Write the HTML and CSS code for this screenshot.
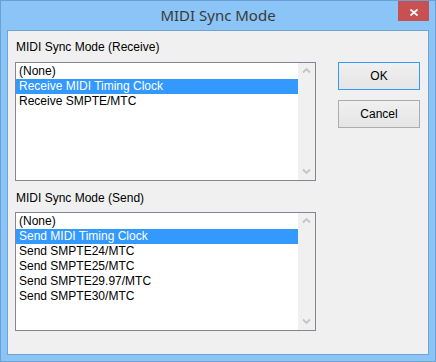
FILE: index.html
```html
<!DOCTYPE html>
<html>
<head>
    <title>MIDI Sync Mode</title>
    <link rel="stylesheet" href="styles.css">
</head>
<body>
    <div class="window">
        <div class="titlebar">
            <span></span>
            <div class="title">MIDI Sync Mode</div>
            <div class="close-btn">
                <svg width="8" height="7" viewBox="0 0 8 7"><path d="M0.5 0.5 L7.5 6.5 M7.5 0.5 L0.5 6.5" stroke="#fff" stroke-width="1.8" fill="none"/></svg>
            </div>
        </div>
        <div class="client">
            <div class="lists">
                <div class="group-label">MIDI Sync Mode (Receive)</div>
                <div class="listbox">
                    <ul class="items">
                        <li>(None)</li>
                        <li class="selected">Receive MIDI Timing Clock</li>
                        <li>Receive SMPTE/MTC</li>
                    </ul>
                    <div class="scrollbar">
                        <svg class="arrow" width="17" height="17" viewBox="0 0 17 17"><path d="M5 9.5 L8.5 6 L12 9.5" stroke="#c4c4c4" stroke-width="1.8" fill="none"/></svg>
                        <svg class="arrow" width="17" height="17" viewBox="0 0 17 17"><path d="M5 6.5 L8.5 10 L12 6.5" stroke="#c4c4c4" stroke-width="1.8" fill="none"/></svg>
                    </div>
                </div>
                <div class="group-label group-send">MIDI Sync Mode (Send)</div>
                <div class="listbox">
                    <ul class="items">
                        <li>(None)</li>
                        <li class="selected">Send MIDI Timing Clock</li>
                        <li>Send SMPTE24/MTC</li>
                        <li>Send SMPTE25/MTC</li>
                        <li>Send SMPTE29.97/MTC</li>
                        <li>Send SMPTE30/MTC</li>
                    </ul>
                    <div class="scrollbar">
                        <svg class="arrow" width="17" height="17" viewBox="0 0 17 17"><path d="M5 9.5 L8.5 6 L12 9.5" stroke="#c4c4c4" stroke-width="1.8" fill="none"/></svg>
                        <svg class="arrow" width="17" height="17" viewBox="0 0 17 17"><path d="M5 6.5 L8.5 10 L12 6.5" stroke="#c4c4c4" stroke-width="1.8" fill="none"/></svg>
                    </div>
                </div>
            </div>
            <div class="buttons">
                <button class="btn btn-default">OK</button>
                <button class="btn">Cancel</button>
            </div>
        </div>
    </div>
</body>
</html>
```

FILE: styles.css
```css
* {
    box-sizing: border-box;
}

body {
    margin: 0;
    font-family: 'Liberation Sans', Arial, sans-serif;
    font-size: 12px;
    color: #000;
}

.window {
    width: 436px;
    height: 362px;
    background-color: #8bc4f6;
    border: 1px solid #6c9fd2;
    display: flex;
    flex-direction: column;
}

.titlebar {
    height: 29px;
    display: grid;
    grid-template-columns: 1fr auto 1fr;
}

.title {
    font-family: 'Noto Sans', sans-serif;
    font-size: 15px;
    line-height: 29px;
    color: #3a3a3a;
}

.close-btn {
    justify-self: end;
    width: 31px;
    height: 20px;
    margin-right: 6px;
    background-color: #c75050;
    display: flex;
    align-items: center;
    justify-content: center;
    padding-top: 2px;
}

.close-btn svg {
    display: block;
}

.client {
    margin: 0 6px 0 6px;
    height: 325px;
    background-color: #f0f0f0;
    border: 1px solid #72a2d0;
    display: flex;
}

.lists {
    padding: 9px 0 0 7px;
    width: 308px;
}

.group-label {
    line-height: 15px;
    padding-left: 1px;
    margin-bottom: 7px;
}

.group-send {
    margin-top: 10px;
    margin-bottom: 6px;
}

.listbox {
    width: 301px;
    height: 119px;
    border: 1px solid #828790;
    background-color: #fff;
    display: flex;
}

.items {
    list-style: none;
    margin: 0;
    padding: 1px 0 0 0;
    flex: 1;
}

.items li {
    height: 15px;
    line-height: 15px;
    padding-left: 3px;
    white-space: nowrap;
}

.items li.selected {
    background-color: #3399ff;
    color: #fff;
}

.scrollbar {
    width: 17px;
    background-color: #f0f0f0;
    display: flex;
    flex-direction: column;
    justify-content: space-between;
}

.arrow {
    display: block;
}

.buttons {
    margin-left: 22px;
    padding-top: 31px;
    display: flex;
    flex-direction: column;
    gap: 10px;
}

.btn {
    width: 82px;
    height: 28px;
    padding: 0;
    font-family: 'Liberation Sans', Arial, sans-serif;
    font-size: 12px;
    color: #000;
    background: linear-gradient(#f0f0f0, #e5e5e5);
    border: 1px solid #acacac;
}

.btn-default {
    border-color: #3399ff;
}
```
